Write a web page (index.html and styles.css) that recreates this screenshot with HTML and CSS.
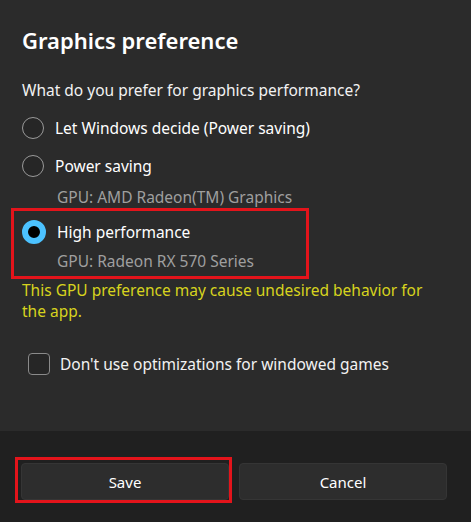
FILE: index.html
```html
<!DOCTYPE html>
<html lang="en">
<head>
    <meta charset="UTF-8">
    <meta name="viewport" content="width=device-width, initial-scale=1.0">
    <title>Graphics preference</title>
    <link rel="stylesheet" href="styles.css">
</head>
<body>

<div class="dialog">
    <div class="content">
        <h1 class="title">Graphics preference</h1>
        <p class="question">What do you prefer for graphics performance?</p>

        <label class="option">
            <span class="radio"></span>
            <span class="option-label">Let Windows decide (Power saving)</span>
        </label>

        <label class="option">
            <span class="radio"></span>
            <span class="option-label">Power saving</span>
        </label>
        <p class="gpu">GPU: AMD Radeon(TM) Graphics</p>

        <div class="highlight">
            <label class="option">
                <span class="radio checked"></span>
                <span class="option-label">High performance</span>
            </label>
            <p class="gpu">GPU: Radeon RX 570 Series</p>
        </div>

        <p class="warning">This GPU preference may cause undesired behavior for the app.</p>

        <label class="check-row">
            <span class="checkbox"></span>
            <span class="check-label">Don't use optimizations for windowed games</span>
        </label>
    </div>

    <div class="footer">
        <div class="btn-mark">
            <button class="btn">Save</button>
        </div>
        <button class="btn">Cancel</button>
    </div>
</div>

</body>
</html>
```

FILE: styles.css
```css
body {
    margin: 0;
    padding: 0;
    background-color: #2b2b2b;
    font-family: "Noto Sans", "Open Sans", sans-serif;
    color: #ffffff;
}

.dialog {
    width: 471px;
    height: 522px;
    display: flex;
    flex-direction: column;
}

.content {
    flex: 1;
    padding: 26px 22px 0 22px;
}

.title {
    margin: 0;
    font-size: 22px;
    font-weight: 600;
    line-height: 28px;
}

.question {
    margin: 26px 0 9px 0;
    font-size: 15.5px;
    line-height: 20px;
    color: #f2f2f2;
}

.option {
    display: flex;
    align-items: center;
    height: 38px;
}

.radio {
    width: 20px;
    height: 20px;
    border: 1.5px solid #9a9a9a;
    border-radius: 50%;
    background-color: #262626;
    flex-shrink: 0;
}

.radio.checked {
    width: 12px;
    height: 12px;
    border: 6px solid #4cc2ff;
    background-color: #000000;
}

.option-label {
    margin-left: 11px;
    font-size: 15.5px;
    color: #ffffff;
}

.gpu {
    margin: 2px 0 1px 35px;
    font-size: 15.5px;
    line-height: 20px;
    color: #9f9f9f;
}

.highlight {
    width: 298px;
    box-sizing: border-box;
    margin: 0 0 0 -11px;
    padding: 2px 0 5px 8px;
    border: 3px solid #e3141b;
}

.highlight .gpu {
    margin: 0 0 0 35px;
}

.warning {
    margin: 1px 0 0 0;
    max-width: 420px;
    font-size: 15.5px;
    line-height: 21px;
    color: #d7d31e;
}

.check-row {
    display: flex;
    align-items: center;
    height: 48px;
    margin: 18px 0 0 6px;
}

.checkbox {
    width: 20px;
    height: 20px;
    border: 1.5px solid #8a8a8a;
    border-radius: 4px;
    background-color: #262626;
}

.check-label {
    margin-left: 10px;
    font-size: 15.5px;
    color: #f2f2f2;
}

.footer {
    height: 91px;
    box-sizing: border-box;
    background-color: #202020;
    padding: 32px 24px 0 21px;
    display: grid;
    grid-template-columns: 1fr 1fr;
    column-gap: 10px;
    align-items: start;
}

.btn {
    width: 100%;
    height: 37px;
    background-color: #2d2d2d;
    border: 1px solid #353535;
    border-radius: 4px;
    color: #ffffff;
    font-family: "Noto Sans", "Open Sans", sans-serif;
    font-size: 15px;
    cursor: pointer;
}

.btn-mark {
    margin: -6px -3px -3px -6px;
    padding: 3px 0 0 3px;
    border: 3px solid #e3141b;
    display: flex;
}
```
